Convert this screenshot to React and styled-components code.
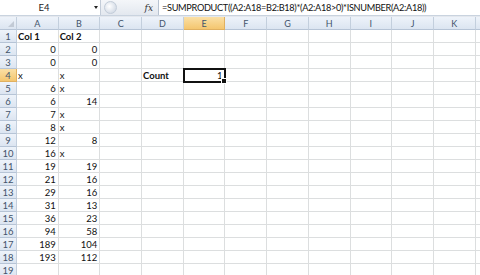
import React from "react";
import styled, { createGlobalStyle } from "styled-components";

const Global = createGlobalStyle`
  html, body { margin: 0; padding: 0; background: #fff; }
  body { font-family: Lato, "Open Sans", "Liberation Sans", sans-serif; overflow: hidden; }
`;

const COLS = ["A", "B", "C", "D", "E", "F", "G", "H", "I", "J", "K", ""];
const COLW = 41.7;

const data = [
  ["Col 1", "Col 2"],
  [0, 0],
  [0, 0],
  ["x", "x", null, "Count", 1],
  [6, "x"],
  [6, 14],
  [7, "x"],
  [8, "x"],
  [12, 8],
  [16, "x"],
  [19, 19],
  [21, 16],
  [29, 16],
  [31, 13],
  [36, 23],
  [94, 58],
  [189, 104],
  [193, 112],
  [],
];

const Page = styled.div`
  width: 480px;
  height: 275px;
  overflow: hidden;
  background: #fff;
`;

const FormulaBar = styled.div`
  display: flex;
  align-items: stretch;
  height: 15px;
  background: #fff;
  border-bottom: 1px solid #c9d3df;
`;

const NameBox = styled.div`
  width: 100px;
  display: flex;
  align-items: center;
  font-size: 9.5px;
  color: #222;
  border-right: 1px solid #c3ccd8;
`;

const NameText = styled.span`
  flex: 1;
  text-align: center;
  padding-left: 2px;
  padding-right: 8px;
`;

const Arrow = styled.span`
  width: 0;
  height: 0;
  border-left: 2.5px solid transparent;
  border-right: 2.5px solid transparent;
  border-top: 3px solid #222;
  margin-right: 2px;
`;

const FxArea = styled.div`
  width: 58px;
  display: flex;
  align-items: center;
  justify-content: space-between;
  background: linear-gradient(#f4f6f9, #e3e8ef);
  border-right: 1px solid #b8c3d1;
  padding: 0 5px 0 3px;
  box-sizing: border-box;
`;

const Knob = styled.span`
  width: 13px;
  height: 13px;
  border-radius: 50%;
  background: radial-gradient(circle at 40% 40%, #ffffff, #d7dee8 70%);
  border: 1px solid #c2ccd8;
  box-sizing: border-box;
`;

const Fx = styled.span`
  font-family: "DejaVu Serif", "Liberation Serif", serif;
  font-style: italic;
  font-size: 9px;
  color: #333;
`;

const FormulaText = styled.div`
  flex: 1;
  display: flex;
  align-items: center;
  padding-left: 3px;
  font-size: 9.2px;
  color: #111;
  white-space: nowrap;
  letter-spacing: -0.32px;
`;

const Separator = styled.div`
  height: 1px;
  background: #e4e8ee;
`;

const Grid = styled.div`
  display: grid;
  grid-template-columns: 17px repeat(12, ${COLW}px);
  grid-auto-rows: 13px;
`;

const Header = styled.div`
  box-sizing: border-box;
  display: flex;
  align-items: center;
  justify-content: center;
  font-size: 9px;
  color: #43546b;
  background: ${(p) =>
    p.$active
      ? "linear-gradient(#fbe0a6, #f4c66f)"
      : "linear-gradient(#eef3fa, #dce5f1)"};
  border-right: 1px solid ${(p) => (p.$active ? "#e0b060" : "#c3cfdd")};
  border-bottom: 1px solid ${(p) => (p.$active ? "#e0b060" : "#b6c4d6")};
`;

const RowHeader = styled(Header)`
  font-size: 9.5px;
`;

const Corner = styled(Header)`
  position: relative;
  &::after {
    content: "";
    position: absolute;
    right: 2px;
    bottom: 2px;
    width: 0;
    height: 0;
    border-left: 6px solid transparent;
    border-bottom: 6px solid #c2cad5;
  }
`;

const Cell = styled.div`
  box-sizing: border-box;
  position: relative;
  display: flex;
  align-items: center;
  justify-content: ${(p) => (p.$num ? "flex-end" : "flex-start")};
  padding: 0 2px 0 1px;
  font-size: 9.5px;
  font-weight: ${(p) => (p.$bold ? 700 : 400)};
  color: #111;
  white-space: nowrap;
  border-right: 1px solid #dcdedf;
  border-bottom: 1px solid #dcdedf;
  ${(p) =>
    p.$selected &&
    `
    outline: 2px solid #111;
    outline-offset: -1px;
    z-index: 2;
  `}
`;

const Handle = styled.span`
  position: absolute;
  right: -3px;
  bottom: -3px;
  width: 4px;
  height: 4px;
  background: #111;
  border: 1px solid #fff;
`;

export default function App() {
  return (
    <Page>
      <Global />
      <FormulaBar>
        <NameBox>
          <NameText>E4</NameText>
          <Arrow />
        </NameBox>
        <FxArea>
          <Knob />
          <Fx>fx</Fx>
        </FxArea>
        <FormulaText>=SUMPRODUCT((A2:A18=B2:B18)*(A2:A18&gt;0)*ISNUMBER(A2:A18))</FormulaText>
      </FormulaBar>
      <Separator />
      <Grid>
        <Corner />
        {COLS.map((c, i) => (
          <Header key={i} $active={c === "E"}>
            {c}
          </Header>
        ))}
        {data.map((row, r) => (
          <React.Fragment key={r}>
            <RowHeader $active={r === 3}>{r + 1}</RowHeader>
            {COLS.map((c, ci) => {
              const v = row[ci];
              const isNum = typeof v === "number";
              const bold = r === 0 || v === "Count";
              const selected = r === 3 && ci === 4;
              return (
                <Cell key={ci} $num={isNum} $bold={bold} $selected={selected}>
                  {v === null || v === undefined ? "" : v}
                  {selected && <Handle />}
                </Cell>
              );
            })}
          </React.Fragment>
        ))}
      </Grid>
    </Page>
  );
}
